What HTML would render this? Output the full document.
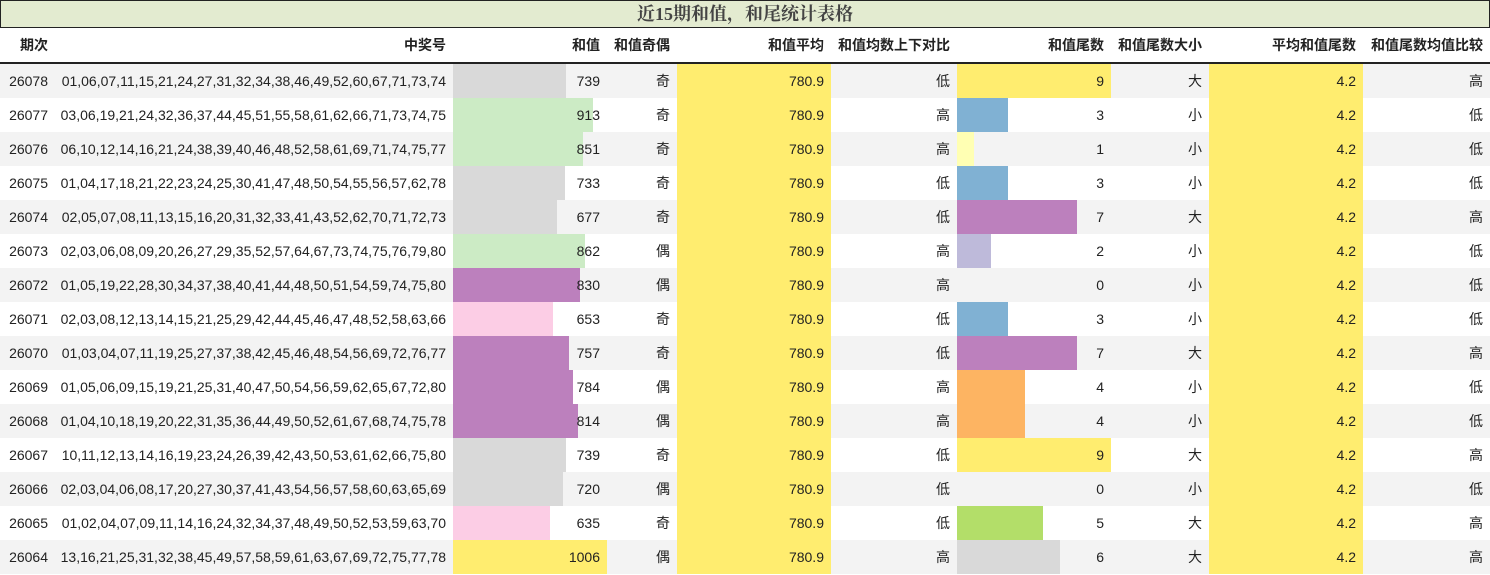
<!DOCTYPE html>
<html><head><meta charset="utf-8"><style>
body{margin:0;width:1490px;height:575px;overflow:hidden;background:#fff;font-family:"Liberation Sans","Noto Sans CJK SC",sans-serif;color:#222;}
.title{position:absolute;left:0;top:0;width:1488px;height:26px;border:1px solid #222;background:#e3ebd0;text-align:center;font:bold 18px "Liberation Serif","Noto Serif CJK SC",serif;color:#444;line-height:27px;}
table{position:absolute;left:0;top:28px;border-collapse:collapse;table-layout:fixed;width:1490px;font-size:14px;}
th{height:34px;font-weight:bold;text-align:right;padding:0 7px 0 0;border-bottom:2px solid #222;font-size:14px;}
td{height:34px;padding:0 7px 0 0;text-align:right;position:relative;white-space:nowrap;}
tr.o td{background:#f3f3f3;}
td span{position:relative;z-index:1}
.b{position:absolute;left:0;top:0;height:34px;z-index:0}
td.y{background:#ffed6f!important}
.gr{background:#d9d9d9}.lg{background:#ccebc5}.pu{background:#bc80bd}.pk{background:#fccde5}.ye{background:#ffed6f}.bl{background:#80b1d3}.ly{background:#ffffb3}.la{background:#bebada}.or{background:#fdb462}.li{background:#b3de69}
</style></head><body>
<div class="title">近15期和值，和尾统计表格</div>
<table>
<colgroup><col style="width:55px"><col style="width:398px"><col style="width:154px"><col style="width:70px"><col style="width:154px"><col style="width:126px"><col style="width:154px"><col style="width:98px"><col style="width:154px"><col style="width:127px"></colgroup>
<tr><th>期次</th><th>中奖号</th><th>和值</th><th>和值奇偶</th><th>和值平均</th><th>和值均数上下对比</th><th>和值尾数</th><th>和值尾数大小</th><th>平均和值尾数</th><th>和值尾数均值比较</th></tr>
<tr class="o"><td>26078</td><td>01,06,07,11,15,21,24,27,31,32,34,38,46,49,52,60,67,71,73,74</td><td><div class="b gr" style="width:113px"></div><span>739</span></td><td>奇</td><td class="y">780.9</td><td>低</td><td><div class="b ye" style="width:154px"></div><span>9</span></td><td>大</td><td class="y">4.2</td><td>高</td></tr>
<tr><td>26077</td><td>03,06,19,21,24,32,36,37,44,45,51,55,58,61,62,66,71,73,74,75</td><td><div class="b lg" style="width:140px"></div><span>913</span></td><td>奇</td><td class="y">780.9</td><td>高</td><td><div class="b bl" style="width:51px"></div><span>3</span></td><td>小</td><td class="y">4.2</td><td>低</td></tr>
<tr class="o"><td>26076</td><td>06,10,12,14,16,21,24,38,39,40,46,48,52,58,61,69,71,74,75,77</td><td><div class="b lg" style="width:130px"></div><span>851</span></td><td>奇</td><td class="y">780.9</td><td>高</td><td><div class="b ly" style="width:17px"></div><span>1</span></td><td>小</td><td class="y">4.2</td><td>低</td></tr>
<tr><td>26075</td><td>01,04,17,18,21,22,23,24,25,30,41,47,48,50,54,55,56,57,62,78</td><td><div class="b gr" style="width:112px"></div><span>733</span></td><td>奇</td><td class="y">780.9</td><td>低</td><td><div class="b bl" style="width:51px"></div><span>3</span></td><td>小</td><td class="y">4.2</td><td>低</td></tr>
<tr class="o"><td>26074</td><td>02,05,07,08,11,13,15,16,20,31,32,33,41,43,52,62,70,71,72,73</td><td><div class="b gr" style="width:104px"></div><span>677</span></td><td>奇</td><td class="y">780.9</td><td>低</td><td><div class="b pu" style="width:120px"></div><span>7</span></td><td>大</td><td class="y">4.2</td><td>高</td></tr>
<tr><td>26073</td><td>02,03,06,08,09,20,26,27,29,35,52,57,64,67,73,74,75,76,79,80</td><td><div class="b lg" style="width:132px"></div><span>862</span></td><td>偶</td><td class="y">780.9</td><td>高</td><td><div class="b la" style="width:34px"></div><span>2</span></td><td>小</td><td class="y">4.2</td><td>低</td></tr>
<tr class="o"><td>26072</td><td>01,05,19,22,28,30,34,37,38,40,41,44,48,50,51,54,59,74,75,80</td><td><div class="b pu" style="width:127px"></div><span>830</span></td><td>偶</td><td class="y">780.9</td><td>高</td><td><span>0</span></td><td>小</td><td class="y">4.2</td><td>低</td></tr>
<tr><td>26071</td><td>02,03,08,12,13,14,15,21,25,29,42,44,45,46,47,48,52,58,63,66</td><td><div class="b pk" style="width:100px"></div><span>653</span></td><td>奇</td><td class="y">780.9</td><td>低</td><td><div class="b bl" style="width:51px"></div><span>3</span></td><td>小</td><td class="y">4.2</td><td>低</td></tr>
<tr class="o"><td>26070</td><td>01,03,04,07,11,19,25,27,37,38,42,45,46,48,54,56,69,72,76,77</td><td><div class="b pu" style="width:116px"></div><span>757</span></td><td>奇</td><td class="y">780.9</td><td>低</td><td><div class="b pu" style="width:120px"></div><span>7</span></td><td>大</td><td class="y">4.2</td><td>高</td></tr>
<tr><td>26069</td><td>01,05,06,09,15,19,21,25,31,40,47,50,54,56,59,62,65,67,72,80</td><td><div class="b pu" style="width:120px"></div><span>784</span></td><td>偶</td><td class="y">780.9</td><td>高</td><td><div class="b or" style="width:68px"></div><span>4</span></td><td>小</td><td class="y">4.2</td><td>低</td></tr>
<tr class="o"><td>26068</td><td>01,04,10,18,19,20,22,31,35,36,44,49,50,52,61,67,68,74,75,78</td><td><div class="b pu" style="width:125px"></div><span>814</span></td><td>偶</td><td class="y">780.9</td><td>高</td><td><div class="b or" style="width:68px"></div><span>4</span></td><td>小</td><td class="y">4.2</td><td>低</td></tr>
<tr><td>26067</td><td>10,11,12,13,14,16,19,23,24,26,39,42,43,50,53,61,62,66,75,80</td><td><div class="b gr" style="width:113px"></div><span>739</span></td><td>奇</td><td class="y">780.9</td><td>低</td><td><div class="b ye" style="width:154px"></div><span>9</span></td><td>大</td><td class="y">4.2</td><td>高</td></tr>
<tr class="o"><td>26066</td><td>02,03,04,06,08,17,20,27,30,37,41,43,54,56,57,58,60,63,65,69</td><td><div class="b gr" style="width:110px"></div><span>720</span></td><td>偶</td><td class="y">780.9</td><td>低</td><td><span>0</span></td><td>小</td><td class="y">4.2</td><td>低</td></tr>
<tr><td>26065</td><td>01,02,04,07,09,11,14,16,24,32,34,37,48,49,50,52,53,59,63,70</td><td><div class="b pk" style="width:97px"></div><span>635</span></td><td>奇</td><td class="y">780.9</td><td>低</td><td><div class="b li" style="width:86px"></div><span>5</span></td><td>大</td><td class="y">4.2</td><td>高</td></tr>
<tr class="o"><td>26064</td><td>13,16,21,25,31,32,38,45,49,57,58,59,61,63,67,69,72,75,77,78</td><td><div class="b ye" style="width:154px"></div><span>1006</span></td><td>偶</td><td class="y">780.9</td><td>高</td><td><div class="b gr" style="width:103px"></div><span>6</span></td><td>大</td><td class="y">4.2</td><td>高</td></tr>
</table>
</body></html>
